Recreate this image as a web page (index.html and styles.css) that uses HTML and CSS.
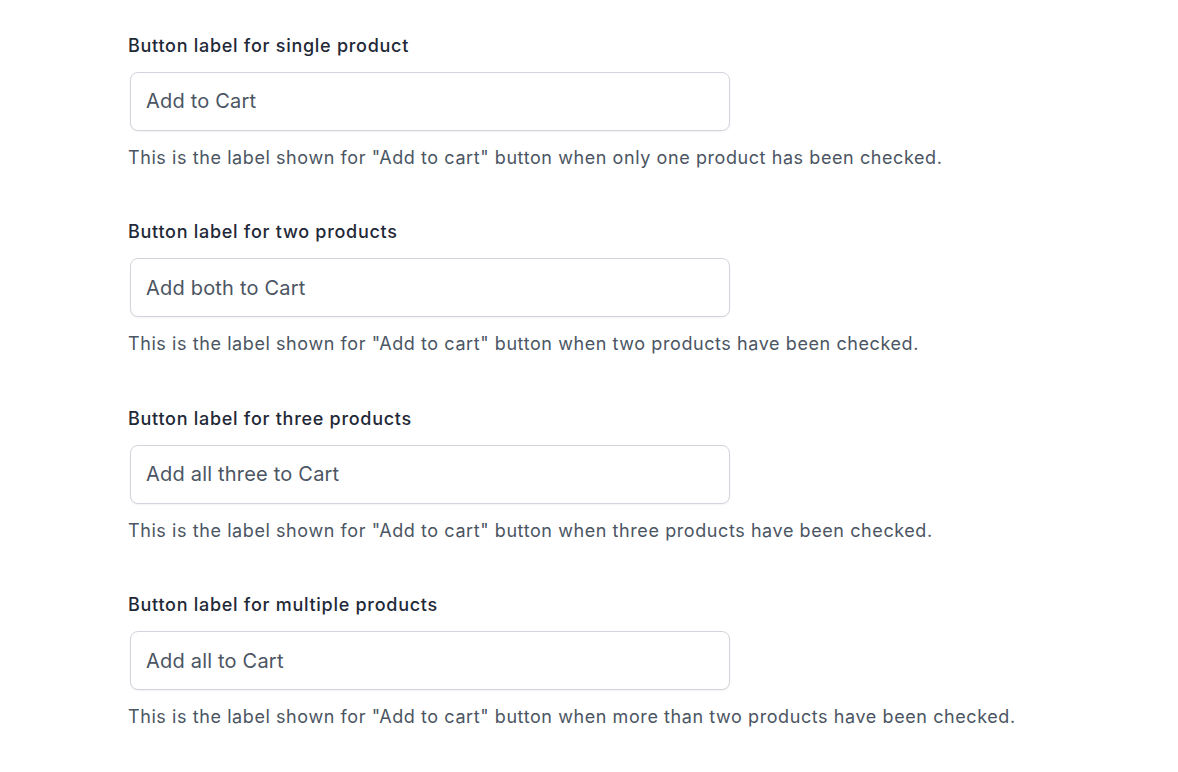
FILE: index.html
```html
<!DOCTYPE html>
<html lang="en">
<head>
<meta charset="utf-8">
<title>Button labels</title>
<link rel="stylesheet" href="styles.css">
</head>
<body>
<main class="settings">
  <div class="field">
    <label class="field-label" for="f1">Button label for single product</label>
    <input class="field-input" id="f1" type="text" value="Add to Cart">
    <p class="field-help">This is the label shown for "Add to cart" button when only one product has been checked.</p>
  </div>
  <div class="field">
    <label class="field-label" for="f2">Button label for two products</label>
    <input class="field-input" id="f2" type="text" value="Add both to Cart">
    <p class="field-help">This is the label shown for "Add to cart" button when two products have been checked.</p>
  </div>
  <div class="field">
    <label class="field-label" for="f3">Button label for three products</label>
    <input class="field-input" id="f3" type="text" value="Add all three to Cart">
    <p class="field-help">This is the label shown for "Add to cart" button when three products have been checked.</p>
  </div>
  <div class="field">
    <label class="field-label" for="f4">Button label for multiple products</label>
    <input class="field-input" id="f4" type="text" value="Add all to Cart">
    <p class="field-help">This is the label shown for "Add to cart" button when more than two products have been checked.</p>
  </div>
</main>
</body>
</html>
```

FILE: styles.css
```css
html, body {
  margin: 0;
  padding: 0;
  background: #ffffff;
}
body {
  font-family: Inter, "Noto Sans", "Liberation Sans", sans-serif;
}
.settings {
  display: flex;
  flex-direction: column;
  gap: 46.6px;
  padding: 31.5px 0 0 128px;
}
.field {
  display: flex;
  flex-direction: column;
  align-items: flex-start;
}
.field-label {
  font-size: 18px;
  line-height: 28px;
  font-weight: 500;
  letter-spacing: 0.72px;
  color: #1f2937;
  margin-bottom: 12px;
}
.field-input {
  box-sizing: border-box;
  width: 600px;
  height: 59px;
  margin-left: 2px;
  padding: 0 15px;
  border: 1px solid #d1d5db;
  border-radius: 8px;
  box-shadow: 0 1px 2px rgba(0, 0, 0, 0.05);
  font-family: inherit;
  font-size: 20px;
  letter-spacing: 0.2px;
  color: #4b5563;
  background: #ffffff;
  outline: none;
}
.field-help {
  margin: 13px 0 0;
  font-size: 18px;
  line-height: 28px;
  letter-spacing: 0.58px;
  color: #4b5563;
}
```
